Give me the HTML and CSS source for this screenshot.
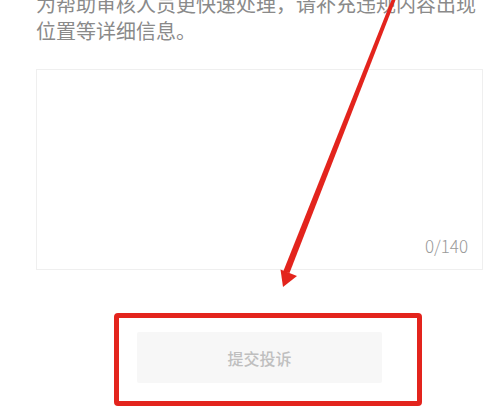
FILE: index.html
```html
<!DOCTYPE html>
<html lang="zh-CN">
<head>
<meta charset="utf-8">
<title>提交投诉</title>
<link rel="stylesheet" href="styles.css">
</head>
<body>
<div class="page">
  <div class="content">
    <p class="hint">为帮助审核人员更快速处理，请补充违规内容出现位置等详细信息。</p>
    <div class="textbox">
      <span class="counter">0/140</span>
    </div>
    <div class="actions">
      <button class="submit" type="button">提交投诉</button>
    </div>
  </div>
  <div class="highlight"></div>
  <svg class="annot" width="501" height="415" viewBox="0 0 501 415" aria-hidden="true">
    <polygon points="391.5,0 395.5,0 289.5,273 283,272" fill="#e3241d"/>
    <polygon points="283,287 280.5,269.5 297,276" fill="#e3241d"/>
  </svg>
</div>
</body>
</html>
```
FILE: styles.css
```css
html, body {
  margin: 0;
  padding: 0;
  background: #ffffff;
}

.page {
  position: relative;
  width: 501px;
  height: 415px;
  overflow: hidden;
  font-family: "Noto Sans CJK SC", "Noto Sans", sans-serif;
}

.content {
  display: flex;
  flex-direction: column;
  padding: 0 18px 0 36px;
}

.hint {
  margin: -10px 0 0 0;
  font-size: 20px;
  line-height: 27px;
  color: #8a8a8a;
  width: 445px;
}

.textbox {
  box-sizing: border-box;
  margin-top: 25px;
  height: 201px;
  border: 1px solid #efefef;
  display: flex;
  align-items: flex-end;
  justify-content: flex-end;
  padding: 0 14px 13px 0;
}

.counter {
  font-size: 17px;
  line-height: 20px;
  color: #9a9a9a;
  font-weight: 300;
}

.actions {
  display: flex;
  justify-content: center;
  margin-top: 62px;
}

.submit {
  width: 245px;
  height: 51px;
  border: none;
  border-radius: 2px;
  background: #f7f7f7;
  color: #bfbfbf;
  font-family: "Noto Sans CJK SC", sans-serif;
  font-size: 16px;
  font-weight: 500;
  padding: 0;
}

.highlight {
  position: absolute;
  left: 114px;
  top: 313px;
  width: 298px;
  height: 83px;
  border: 5px solid #e3241d;
  border-radius: 4px;
}

.annot {
  position: absolute;
  left: 0;
  top: 0;
}
```
